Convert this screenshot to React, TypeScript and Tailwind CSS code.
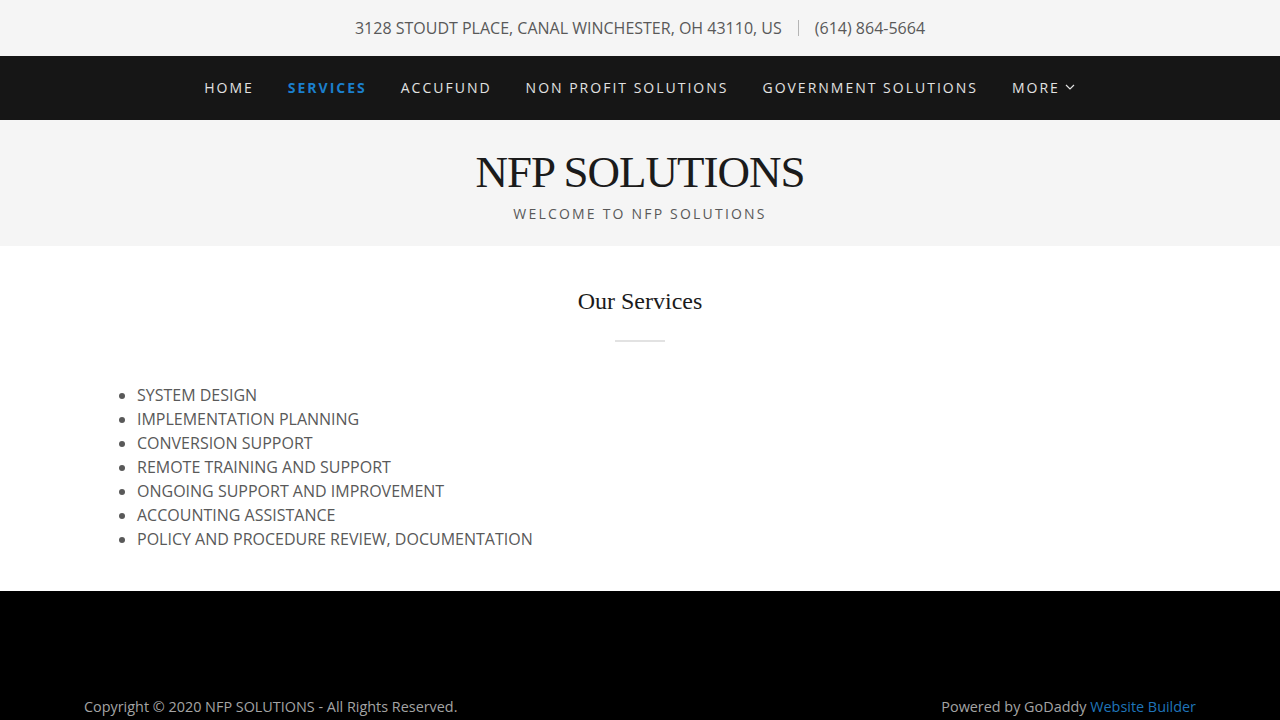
const NAV_ITEMS = ['Home', 'Services', 'AccuFund', 'Non Profit Solutions', 'Government Solutions'];

const SERVICES = [
  'SYSTEM DESIGN',
  'IMPLEMENTATION PLANNING',
  'CONVERSION SUPPORT',
  'REMOTE TRAINING AND SUPPORT',
  'ONGOING SUPPORT AND IMPROVEMENT',
  'ACCOUNTING ASSISTANCE',
  'POLICY AND PROCEDURE REVIEW, DOCUMENTATION',
];

const sans = "font-['Open_Sans','Liberation_Sans',sans-serif]";
const serif = "font-['Liberation_Serif','DejaVu_Serif',serif]";

export default function App(): React.ReactElement {
  return (
    <div className={`min-h-screen bg-white ${sans}`}>
      {/* contact bar */}
      <div className="flex h-14 items-center justify-center bg-[#f5f5f5] text-[16px] text-[#595959]">
        <span>3128 STOUDT PLACE, CANAL WINCHESTER, OH 43110, US</span>
        <span className="mx-4 h-4 w-px bg-[#b5b5b5]" />
        <span>(614) 864-5664</span>
      </div>

      {/* nav */}
      <nav className="flex h-16 items-center justify-center gap-[34px] bg-[#161616] pb-[2px] text-[14px] uppercase tracking-[2px]">
        {NAV_ITEMS.map((item) => (
          <a
            key={item}
            className={item === 'Services' ? 'font-bold text-[#1b7fcc]' : 'text-[#e2e2e2]'}
          >
            {item}
          </a>
        ))}
        <a className="flex items-center gap-1 text-[#e2e2e2]">
          MORE
          <svg width="12" height="12" viewBox="0 0 12 12" fill="none" stroke="currentColor" strokeWidth="1.2">
            <path d="M2 4l4 4 4-4" />
          </svg>
        </a>
      </nav>

      {/* hero */}
      <header className="flex h-[126px] flex-col items-center justify-center bg-[#f5f5f5] pt-[2px]">
        <h1 className={`${serif} text-[45px] leading-[54px] tracking-[-1px] text-[#1b1b1b]`}>NFP SOLUTIONS</h1>
        <p className="mt-[4px] text-[14px] uppercase tracking-[2.2px] text-[#595959]">Welcome to NFP Solutions</p>
      </header>

      {/* services */}
      <section className="bg-white pb-[40px] pt-[39px]">
        <h2 className={`${serif} text-center text-[24px] leading-8 text-[#1b1b1b]`}>Our Services</h2>
        <div className="mx-auto mt-[23px] h-[2px] w-[50px] bg-[#e2e2e2]" />
        <ul className="ml-[137px] mt-[41px] list-disc text-[16px] leading-6 text-[#595959] marker:text-[#595959]">
          {SERVICES.map((s) => (
            <li key={s}>{s}</li>
          ))}
        </ul>
      </section>

      {/* footer */}
      <footer className="flex h-[129px] items-end justify-between bg-black px-[84px] pb-[1px] text-[14.4px] leading-6 text-[#a4a4a4]">
        <p>Copyright © 2020 NFP SOLUTIONS - All Rights Reserved.</p>
        <p>
          Powered by GoDaddy <a className="text-[#1f74b8]">Website Builder</a>
        </p>
      </footer>
    </div>
  );
}
